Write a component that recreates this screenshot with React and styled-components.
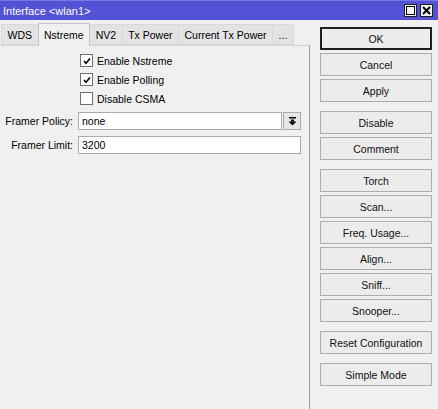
import React, { useState } from 'react'
import styled, { createGlobalStyle } from 'styled-components'

const GlobalStyle = createGlobalStyle`
  html, body {
    margin: 0;
    padding: 0;
    background: #f0f0f0;
  }
  * {
    box-sizing: border-box;
  }
`

const Window = styled.div`
  display: flex;
  flex-direction: column;
  width: 438px;
  height: 409px;
  background: #f0f0f0;
  font-family: "Liberation Sans", Arial, sans-serif;
  font-size: 10.5px;
  color: #000;
  overflow: hidden;
`

const TitleBar = styled.div`
  display: flex;
  align-items: center;
  justify-content: space-between;
  height: 20px;
  padding: 0 5px 0 3px;
  background: #5252d4;
  border-top: 1px solid #7878e0;
  color: #fff;
  font-size: 11px;
`

const TitleButtons = styled.div`
  display: flex;
  gap: 3px;
`

const TitleButton = styled.div`
  display: flex;
  align-items: center;
  justify-content: center;
  width: 13px;
  height: 13px;
  background: #f4f4f4;
  border: 1px solid #222;
`

const Body = styled.div`
  display: flex;
  flex: 1;
`

const Content = styled.div`
  display: flex;
  flex-direction: column;
  width: 310px;
`

const TabBar = styled.div`
  display: flex;
  align-items: flex-end;
  height: 25px;
  padding: 2px 0 0 2px;
`

const Tab = styled.div`
  display: flex;
  align-items: center;
  justify-content: center;
  height: ${p => (p.$active ? '23px' : '21px')};
  padding: 0 5.5px;
  margin-bottom: ${p => (p.$active ? '-1px' : '0')};
  background: ${p => (p.$active ? '#f0f0f0' : '#e3e3e3')};
  border: 1px solid ${p => (p.$active ? '#c4c4c4' : '#d9d9d9')};
  border-bottom: ${p => (p.$active ? 'none' : '1px solid #d9d9d9')};
  margin-left: -1px;
  white-space: nowrap;
  position: relative;
  z-index: ${p => (p.$active ? 1 : 0)};
`

const Panel = styled.div`
  flex: 1;
  border-top: 1px solid #d3d3d3;
  border-right: 1px solid #a0a0a0;
  padding-top: 5px;
`

const CheckList = styled.div`
  display: flex;
  flex-direction: column;
  padding-left: 80px;
`

const CheckRow = styled.label`
  display: flex;
  align-items: center;
  height: 19px;
  gap: 4px;
`

const Box = styled.span`
  display: flex;
  align-items: center;
  justify-content: center;
  width: 13px;
  height: 13px;
  background: #fff;
  border: 1px solid #707070;
`

const Form = styled.div`
  display: flex;
  flex-direction: column;
  gap: 6px;
  margin-top: 4px;
`

const FormRow = styled.div`
  display: flex;
  align-items: center;
  gap: 5px;
`

const Label = styled.div`
  width: 73px;
  text-align: right;
  white-space: nowrap;
`

const Field = styled.div`
  display: flex;
  align-items: center;
  width: ${p => p.$width}px;
  height: 18px;
  padding: 0 3px;
  background: #fff;
  border: 1px solid #ababab;
`

const DropButton = styled.div`
  display: flex;
  align-items: center;
  justify-content: center;
  width: 18px;
  height: 18px;
  margin-left: -4px;
  background: #e6e6e6;
  border: 1px solid #ababab;
`

const Side = styled.div`
  display: flex;
  flex-direction: column;
  gap: 9px;
  padding: 7px 0 0 10px;
`

const Group = styled.div`
  display: flex;
  flex-direction: column;
  gap: 3px;
`

const Button = styled.button`
  width: 112px;
  height: 23px;
  padding: 0;
  background: #ececec;
  border: 1px solid ${p => (p.$default ? '#1e1e1e' : '#adadad')};
  box-shadow: ${p => (p.$default ? 'inset 0 0 0 1px #1e1e1e' : 'none')};
  font-family: inherit;
  font-size: 10.5px;
  font-weight: 400;
  color: #111;
`

const tabs = ['WDS', 'Nstreme', 'NV2', 'Tx Power', 'Current Tx Power', '...']

const buttonGroups = [
  ['OK', 'Cancel', 'Apply'],
  ['Disable', 'Comment'],
  ['Torch', 'Scan...', 'Freq. Usage...', 'Align...', 'Sniff...', 'Snooper...'],
  ['Reset Configuration'],
  ['Simple Mode'],
]

const CheckMark = () => (
  <svg width="8" height="8" viewBox="0 0 8 8">
    <path d="M1 4 L3 6.3 L7 1.5" fill="none" stroke="#000" strokeWidth="1.6" />
  </svg>
)

const App = () => {
  const [checks, setChecks] = useState([
    { label: 'Enable Nstreme', on: true },
    { label: 'Enable Polling', on: true },
    { label: 'Disable CSMA', on: false },
  ])

  const toggle = idx => {
    setChecks(checks.map((c, i) => (i === idx ? { ...c, on: !c.on } : c)))
  }

  return (
    <>
      <GlobalStyle />
      <Window>
        <TitleBar>
          <span>Interface &lt;wlan1&gt;</span>
          <TitleButtons>
            <TitleButton>
              <svg width="9" height="9" viewBox="0 0 9 9">
                <rect x="0.5" y="0.5" width="8" height="8" fill="none" stroke="#000" />
              </svg>
            </TitleButton>
            <TitleButton>
              <svg width="9" height="9" viewBox="0 0 9 9">
                <path d="M1 1 L8 8 M8 1 L1 8" stroke="#000" strokeWidth="2" />
              </svg>
            </TitleButton>
          </TitleButtons>
        </TitleBar>
        <Body>
          <Content>
            <TabBar>
              {tabs.map(t => (
                <Tab key={t} $active={t === 'Nstreme'}>{t}</Tab>
              ))}
            </TabBar>
            <Panel>
              <CheckList>
                {checks.map((c, idx) => (
                  <CheckRow key={c.label} onClick={() => toggle(idx)}>
                    <Box>{c.on && <CheckMark />}</Box>
                    {c.label}
                  </CheckRow>
                ))}
              </CheckList>
              <Form>
                <FormRow>
                  <Label>Framer Policy:</Label>
                  <Field $width={204}>none</Field>
                  <DropButton>
                    <svg width="9" height="9" viewBox="0 0 9 9">
                      <rect x="1" y="0" width="7" height="1.5" fill="#000" />
                      <rect x="3" y="2.5" width="3" height="2" fill="#000" />
                      <path d="M0.5 4.5 L8.5 4.5 L4.5 8.5 Z" fill="#000" />
                    </svg>
                  </DropButton>
                </FormRow>
                <FormRow>
                  <Label>Framer Limit:</Label>
                  <Field $width={223}>3200</Field>
                </FormRow>
              </Form>
            </Panel>
          </Content>
          <Side>
            {buttonGroups.map((group, gi) => (
              <Group key={gi}>
                {group.map(b => (
                  <Button key={b} $default={b === 'OK'}>{b}</Button>
                ))}
              </Group>
            ))}
          </Side>
        </Body>
      </Window>
    </>
  )
}

export default App
